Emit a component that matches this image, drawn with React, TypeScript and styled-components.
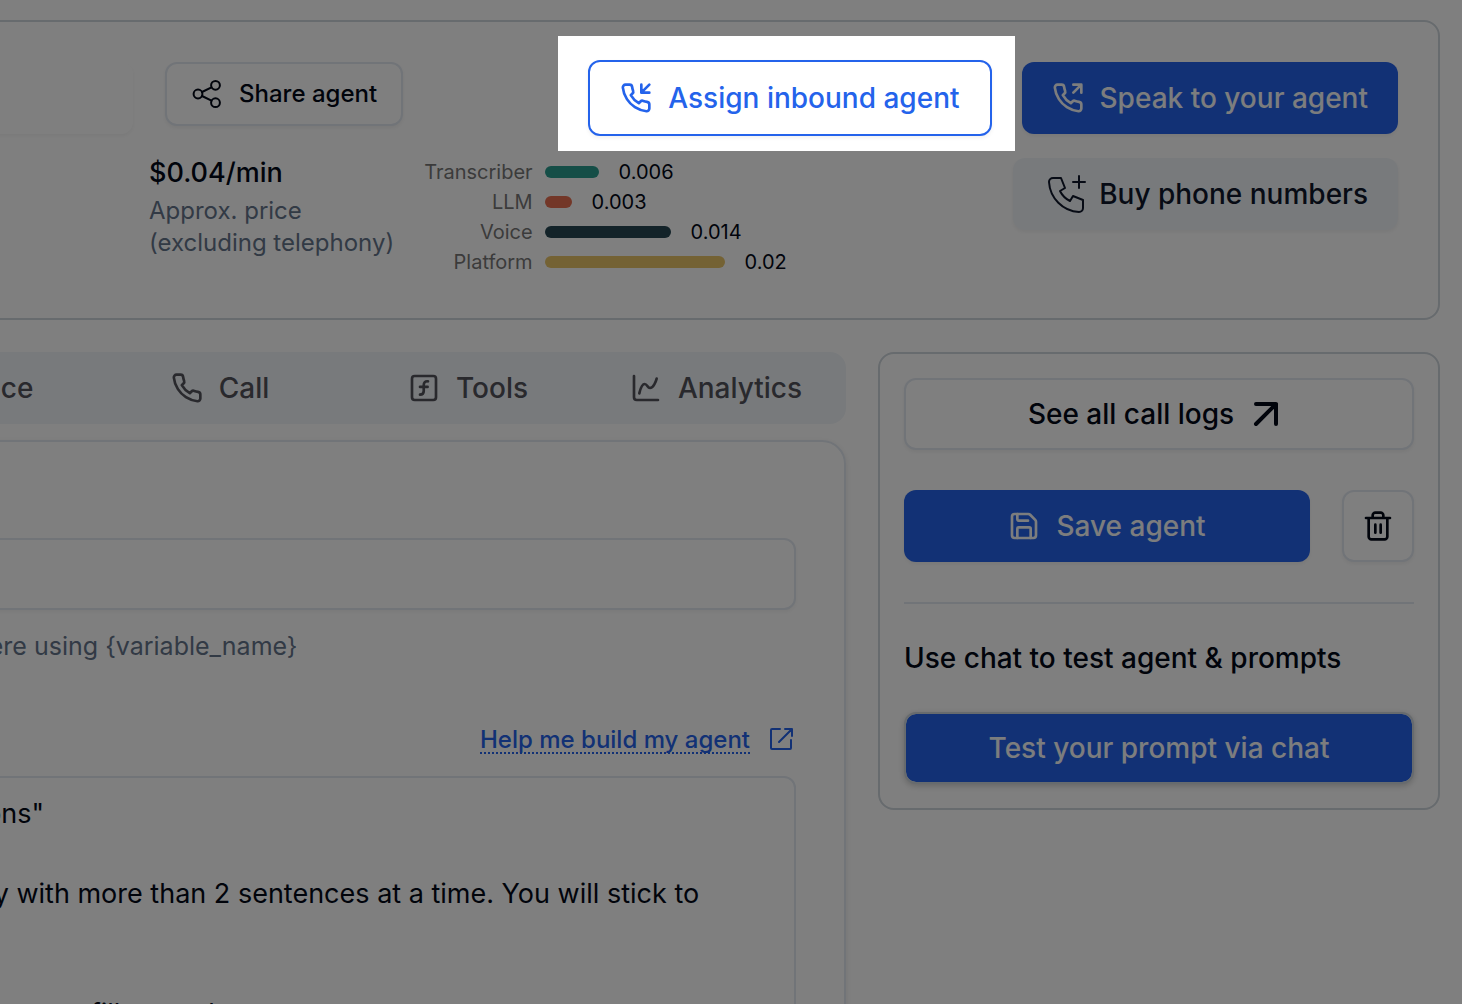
import React from "react";
import styled, { createGlobalStyle, css } from "styled-components";
import { AudioLines, ChartSpline, Save, SquareFunction } from "lucide-react";

const colors = {
  ink: "#020817",
  muted: "#64748b",
  tab: "#52525b",
  chartLabel: "#777777",
  blue: "#2463eb",
  line: "#e2e8f0",
  frame: "#cfd6dc",
  soft: "#f1f5f9",
  onBlue: "#f8fafc",
};

const GlobalStyle = createGlobalStyle`
  *, *::before, *::after { box-sizing: border-box; }
  body {
    margin: 0;
    background: #fff;
    color: ${colors.ink};
    font-family: Inter, "Liberation Sans", sans-serif;
    font-size: 28px;
    line-height: 40px;
    overflow: hidden;
  }
  button, input, textarea { font: inherit; color: inherit; }
  svg { flex: none; }
`;

const Viewport = styled.div`
  height: 100vh;
  overflow: hidden;
`;

const Page = styled.div`
  display: flex;
  flex-direction: column;
  gap: 32px;
  margin-left: -158px;
  padding: 20px 22px 0 0;
`;

const Header = styled.header`
  display: flex;
  flex-direction: column;
  gap: 16px;
  min-height: 300px;
  padding: 40px 40px 40px 24px;
  border: 2px solid ${colors.frame};
  border-radius: 16px;
`;

const HeaderRow = styled.div`
  display: flex;
  align-items: flex-start;
  justify-content: space-between;
`;

const NameRow = styled.div`
  display: flex;
  align-items: flex-start;
  gap: 32px;
`;

const NameInput = styled.input`
  width: 265px;
  height: 72px;
  border: 0;
  border-radius: 12px;
  background: #fff;
  box-shadow: 0 2px 4px rgba(0, 0, 0, 0.05);
`;

const variants = {
  primary: css`
    background: ${colors.blue};
    color: ${colors.onBlue};
  `,
  outline: css`
    border: 2px solid ${colors.line};
    background: #fff;
  `,
  accent: css`
    height: 76px;
    border: 2px solid ${colors.blue};
    background: #fff;
    color: ${colors.blue};
  `,
  soft: css`
    margin-top: 8px;
    background: ${colors.soft};
    color: #0f172a;
  `,
  framed: css`
    border: 2px solid ${colors.frame};
    background: ${colors.blue};
    background-clip: padding-box;
    color: ${colors.onBlue};
    box-shadow: 0 2px 6px rgba(0, 0, 0, 0.2);
  `,
};

const Button = styled.button<{
  $variant: keyof typeof variants;
  $size?: "small" | "icon";
  $gap?: number;
  $grow?: boolean;
}>`
  display: flex;
  align-items: center;
  justify-content: center;
  gap: ${(p) => p.$gap ?? 16}px;
  height: 72px;
  padding: 0 30px;
  border: 0;
  border-radius: 12px;
  font-weight: 500;
  white-space: nowrap;
  cursor: pointer;
  box-shadow: 0 2px 4px rgba(0, 0, 0, 0.06);
  ${(p) => variants[p.$variant]}
  ${(p) => p.$grow && "flex: 1;"}
  ${(p) =>
    p.$size === "small" &&
    css`
      height: 64px;
      padding: 0 24px;
      font-size: 24px;
      line-height: 32px;
    `}
  ${(p) => p.$size === "icon" && "width: 72px; padding: 0;"}
`;

const CostRow = styled.div`
  display: flex;
  gap: 30px;
  padding-left: 281px;
`;

const Price = styled.p`
  margin: 0;
  font-size: 27px;
  font-weight: 500;
  line-height: 45px;
`;

const PriceNote = styled.p`
  margin: 0;
  color: ${colors.muted};
  font-size: 24px;
  line-height: 32px;
  white-space: nowrap;
`;

const CostTable = styled.table`
  align-self: flex-start;
  margin-top: 7px;
  border-spacing: 0;
  font-size: 20px;
  line-height: 30px;
`;

const CostName = styled.th`
  padding: 0 12px 0 0;
  color: ${colors.chartLabel};
  font-weight: 400;
  text-align: right;
`;

const CostValue = styled.td`
  display: flex;
  align-items: center;
  gap: 20px;
  padding: 0;
`;

const CostBar = styled.span<{ $color: string }>`
  height: 12px;
  border-radius: 6px;
  background: ${(p) => p.$color};
`;

const CallActions = styled.div`
  display: flex;
  align-items: center;
  gap: 30px;
  height: 72px;
`;

const Spotlight = styled.div`
  position: relative;
  &::after {
    content: "";
    position: absolute;
    inset: -24px -23px -15px -30px;
    z-index: 10;
    box-shadow: 0 0 0 2000px rgba(0, 0, 0, 0.5);
    pointer-events: none;
  }
`;

const Workspace = styled.div`
  display: flex;
  align-items: flex-start;
  gap: 32px;
`;

const Editor = styled.main`
  flex: 1;
  min-width: 0;
`;

const Tabs = styled.div`
  display: grid;
  grid-template-columns: repeat(4, 1fr);
  margin-bottom: 16px;
  padding: 0 6px;
  border-radius: 16px;
  background: ${colors.soft};
`;

const Tab = styled.button`
  display: flex;
  align-items: center;
  justify-content: center;
  gap: 16px;
  height: 72px;
  padding: 0;
  border: 0;
  background: none;
  color: ${colors.tab};
  font-weight: 500;
`;

const Form = styled.section`
  padding: 96px 48px 48px 48px;
  border: 2px solid ${colors.line};
  border-radius: 24px;
  box-shadow: 0 2px 6px rgba(0, 0, 0, 0.1);
`;

const WelcomeInput = styled.input`
  display: block;
  width: 100%;
  height: 72px;
  padding: 0 24px;
  border: 2px solid ${colors.line};
  border-radius: 12px;
  background: #fff;
  box-shadow: 0 2px 4px rgba(0, 0, 0, 0.05);
`;

const Hint = styled.p`
  margin: 16px 0 58px;
  padding-left: 82px;
  color: ${colors.muted};
  font-size: 25px;
`;

const HelpRow = styled.div`
  display: flex;
  align-items: center;
  justify-content: flex-end;
  gap: 18px;
  height: 30px;
  margin-bottom: 22px;
  padding-right: 2px;
  color: ${colors.blue};
`;

const HelpLink = styled.a`
  padding-top: 4px;
  border-bottom: 2px dotted ${colors.blue};
  color: inherit;
  font-size: 24px;
  font-weight: 500;
  line-height: 24px;
  text-decoration: none;
`;

const PromptArea = styled.textarea`
  display: block;
  width: 100%;
  height: 480px;
  padding: 16px 24px 16px 51px;
  border: 2px solid ${colors.line};
  border-radius: 12px;
  background: #fff;
  font-size: 27px;
  resize: none;
  white-space: pre;
  overflow: hidden;
`;

const Sidebar = styled.aside`
  display: flex;
  flex: 0 0 562px;
  flex-direction: column;
  gap: 40px;
  padding: 24px;
  border: 2px solid ${colors.frame};
  border-radius: 16px;
`;

const SaveRow = styled.div`
  display: flex;
  gap: 32px;
`;

const Divider = styled.hr`
  width: 100%;
  height: 2px;
  margin: 0;
  border: 0;
  background: ${colors.line};
`;

const ChatTitle = styled.h2`
  margin: 0;
  font-size: 28px;
  font-weight: 500;
  line-height: 28px;
`;

function Icon({
  size = 32,
  box = 24,
  stroke = 2,
  children,
}: {
  size?: number;
  box?: number;
  stroke?: number;
  children: React.ReactNode;
}) {
  return (
    <svg
      width={size}
      height={size}
      viewBox={`0 0 ${box} ${box}`}
      fill="none"
      stroke="currentColor"
      strokeWidth={stroke}
      strokeLinecap="round"
      strokeLinejoin="round"
      aria-hidden="true"
    >
      {children}
    </svg>
  );
}

const Handset = () => (
  <path d="M22 16.92v3a2 2 0 0 1-2.18 2 19.79 19.79 0 0 1-8.63-3.07 19.5 19.5 0 0 1-6-6 19.79 19.79 0 0 1-3.07-8.67A2 2 0 0 1 4.11 2h3a2 2 0 0 1 2 1.72 12.84 12.84 0 0 0 .7 2.81 2 2 0 0 1-.45 2.11L8.09 9.91a16 16 0 0 0 6 6l1.27-1.27a2 2 0 0 1 2.11-.45 12.84 12.84 0 0 0 2.81.7A2 2 0 0 1 22 16.92z" />
);

const costs = [
  { name: "Transcriber", value: 0.006, color: "#2a9d8f" },
  { name: "LLM", value: 0.003, color: "#e76e50" },
  { name: "Voice", value: 0.014, color: "#264753" },
  { name: "Platform", value: 0.02, color: "#e8c468" },
];
const BAR_SCALE = 9000;

const prompt = [
  'ersons"',
  "",
  "reply with more than 2 sentences at a time. You will stick to",
  "",
  "",
  "as you can fill a need",
].join("\n");

export default function App() {
  return (
    <Viewport>
      <GlobalStyle />
      <Page>
        <Header>
          <HeaderRow>
            <NameRow>
              <NameInput aria-label="Agent name" />
              <Button $variant="outline" $size="small">
                <Icon box={32}>
                  <circle cx="7" cy="16" r="4.4" />
                  <circle cx="24.5" cy="7.3" r="4.4" />
                  <circle cx="24.5" cy="24.7" r="4.4" />
                  <path d="M11 14 20.5 9.3M11 18l9.500 4.700" />
                </Icon>
                Share agent
              </Button>
            </NameRow>
            <CallActions>
              <Spotlight>
                <Button $variant="accent">
                  <Icon>
                    <path d="M16 2v6h6M22 2l-6 6" />
                    <Handset />
                  </Icon>
                  Assign inbound agent
                </Button>
              </Spotlight>
              <Button $variant="primary">
                <Icon>
                  <path d="M22 8V2h-6M16 8l6-6" />
                  <Handset />
                </Icon>
                Speak to your agent
              </Button>
            </CallActions>
          </HeaderRow>
          <HeaderRow>
            <CostRow>
              <div>
                <Price>$0.04/min</Price>
                <PriceNote>
                  Approx. price
                  <br />
                  (excluding telephony)
                </PriceNote>
              </div>
              <CostTable>
                <tbody>
                  {costs.map((c) => (
                    <tr key={c.name}>
                      <CostName scope="row">{c.name}</CostName>
                      <CostValue>
                        <CostBar $color={c.color} style={{ width: c.value * BAR_SCALE }} />
                        {c.value}
                      </CostValue>
                    </tr>
                  ))}
                </tbody>
              </CostTable>
            </CostRow>
            <Button $variant="soft" $gap={8}>
              <Icon size={48} stroke={1}>
                <path d="M5 4h4l2 5l-2.500 1.500a11 11 0 0 0 5 5l1.500 -2.500l5 2v4a2 2 0 0 1 -2 2a16 16 0 0 1 -15 -15a2 2 0 0 1 2 -2M15 6h6M18 3v6" />
              </Icon>
              Buy phone numbers
            </Button>
          </HeaderRow>
        </Header>
        <Workspace>
          <Editor>
            <Tabs role="tablist">
              <Tab role="tab">
                <AudioLines size={32} aria-hidden />
                Voice
              </Tab>
              <Tab role="tab">
                <Icon>
                  <Handset />
                </Icon>
                Call
              </Tab>
              <Tab role="tab">
                <SquareFunction size={32} aria-hidden />
                Tools
              </Tab>
              <Tab role="tab">
                <ChartSpline size={32} aria-hidden />
                Analytics
              </Tab>
            </Tabs>
            <Form>
              <WelcomeInput aria-label="Welcome message" />
              <Hint>here using {"{variable_name}"}</Hint>
              <HelpRow>
                <HelpLink href="#help">Help me build my agent</HelpLink>
                <Icon size={26} box={26}>
                  <path d="M12 3H4a1 1 0 0 0-1 1v18a1 1 0 0 0 1 1h18a1 1 0 0 0 1-1v-8M17 3h7v7M23 4 11 16" />
                </Icon>
              </HelpRow>
              <PromptArea aria-label="Agent prompt" defaultValue={prompt} spellCheck={false} />
            </Form>
          </Editor>
          <Sidebar>
            <Button $variant="outline">
              See all call logs
              <Icon size={40} box={40} stroke={4}>
                <path d="M6 10h20v20M26 10 6 30" />
              </Icon>
            </Button>
            <SaveRow>
              <Button $variant="primary" $grow>
                <Save size={32} aria-hidden />
                Save agent
              </Button>
              <Button $variant="outline" $size="icon" aria-label="Delete agent">
                <Icon>
                  <path d="M3 6h18M19 6v14c0 1-1 2-2 2H7c-1 0-2-1-2-2V6M8 6V4c0-1 1-2 2-2h4c1 0 2 1 2 2v2M10 11v6M14 11v6" />
                </Icon>
              </Button>
            </SaveRow>
            <Divider />
            <ChatTitle>Use chat to test agent &amp; prompts</ChatTitle>
            <Button $variant="framed">Test your prompt via chat</Button>
          </Sidebar>
        </Workspace>
      </Page>
    </Viewport>
  );
}
